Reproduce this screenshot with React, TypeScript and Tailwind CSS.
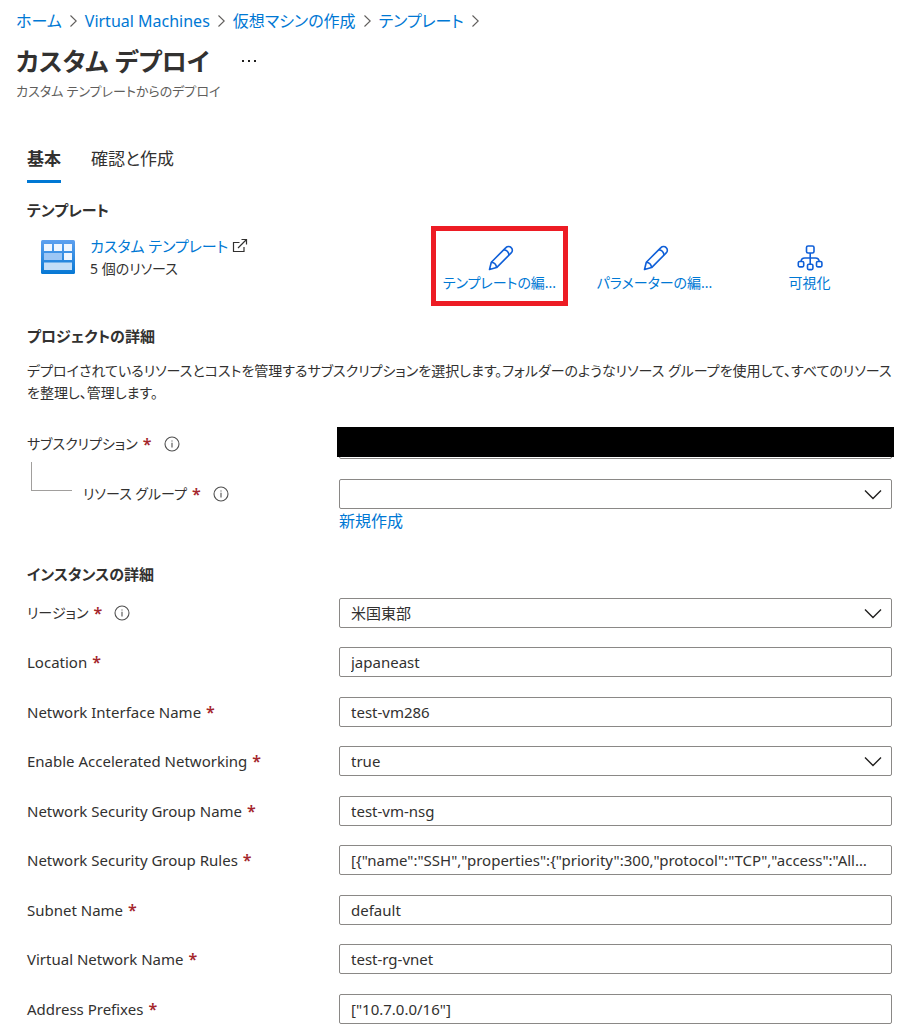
import { Fragment, type ReactNode } from "react";

type Field = {
  id: string;
  label: string;
  value: string;
  kind: "text" | "select";
  info?: boolean;
};

const crumbs = ["ホーム", "Virtual Machines", "仮想マシンの作成", "テンプレート"];

const fields: Field[] = [
  { id: "region", label: "リージョン", value: "米国東部", kind: "select", info: true },
  { id: "location", label: "Location", value: "japaneast", kind: "text" },
  { id: "nic", label: "Network Interface Name", value: "test-vm286", kind: "text" },
  { id: "accelerated", label: "Enable Accelerated Networking", value: "true", kind: "select" },
  { id: "nsg", label: "Network Security Group Name", value: "test-vm-nsg", kind: "text" },
  {
    id: "rules",
    label: "Network Security Group Rules",
    value:
      '[{"name":"SSH","properties":{"priority":300,"protocol":"TCP","access":"Allow","direction":"Inbound"}}]',
    kind: "text",
  },
  { id: "subnet", label: "Subnet Name", value: "default", kind: "text" },
  { id: "vnet", label: "Virtual Network Name", value: "test-rg-vnet", kind: "text" },
  { id: "prefixes", label: "Address Prefixes", value: '["10.7.0.0/16"]', kind: "text" },
];

function InfoIcon() {
  return (
    <svg className="ml-3 size-4 shrink-0" viewBox="0 0 16 16" fill="none" stroke="#505050" aria-hidden="true">
      <circle cx="8" cy="8" r="7" strokeWidth="1.1" />
      <path d="M8 6.8V11.6M8 4.4V5.6" strokeWidth="1.1" />
    </svg>
  );
}

function PencilIcon() {
  return (
    <svg className="size-7" viewBox="0 0 28 28" fill="none" stroke="#0f5fd8" strokeWidth="1.6" strokeLinejoin="round" aria-hidden="true">
      <path d="M3.500 25.500 5.300 18.200 19.900 3.600a3.6 3.6 0 0 1 5.3 0 3.6 3.6 0 0 1 0 5.3L10.600 23.600Z" />
      <path d="M5.300 18.200c2.9.2 4.9 2.3 5.3 5.4M17.700 5.800c2.9.3 4.9 2.3 5.3 5.3" />
    </svg>
  );
}

function HierarchyIcon() {
  return (
    <svg className="size-7" viewBox="0 0 28 28" fill="none" stroke="#0f5fd8" strokeWidth="1.6" aria-hidden="true">
      <rect x="10.5" y="2" width="7.5" height="7" rx="1.6" />
      <rect x="2.300" y="17.5" width="5.400" height="5.400" rx="1.3" />
      <rect x="11.500" y="20.200" width="5.400" height="5.400" rx="1.3" />
      <rect x="20.500" y="17.5" width="5.400" height="5.400" rx="1.3" />
      <path d="M14.200 9V20.200M5 17.5c.2-2.400 1.400-3.5 3.800-3.5h10.600c2.400 0 3.6 1.1 3.8 3.5" />
    </svg>
  );
}

function TemplateIcon() {
  return (
    <svg className="h-[34px] w-[34px] shrink-0" viewBox="0 0 34 34" aria-hidden="true">
      <defs>
        <linearGradient id="tile" x1="0" y1="0" x2="0" y2="1">
          <stop offset="0" stopColor="#5ea0ef" />
          <stop offset="1" stopColor="#0678d4" />
        </linearGradient>
      </defs>
      <rect width="34" height="34" rx="1.5" fill="url(#tile)" />
      <path d="M3 4h8v7H3zM13 4h8v7h-8zM23 4h8v7h-8zM23 13h8v7h-8z" fill="#f0f6fe" />
      <path d="M3 13h18v7H3z" fill="#9cc6f5" />
      <path d="M3 22.500h28v7.500H3z" fill="#c3def7" />
    </svg>
  );
}

function ExternalIcon() {
  return (
    <svg className="ml-1 size-4" viewBox="0 0 16 16" fill="none" stroke="#323130" strokeWidth="1.2" aria-hidden="true">
      <path d="M7.500 4.500H1.500V13.500H12V9" />
      <path d="M6 10 14.500 1.500M9.500 1.500h5v5" />
    </svg>
  );
}

function Required() {
  return <span className="ml-[5px] text-base leading-5 font-semibold text-[#a4262c]">*</span>;
}

function FieldLabel({ id, children, info }: { id: string; children: ReactNode; info?: boolean }) {
  return (
    <label
      htmlFor={id}
      className={info ? "flex h-[30px] items-center text-sm" : "flex h-[30px] items-center text-[15px]"}
    >
      {children}
      <Required />
      {info && <InfoIcon />}
    </label>
  );
}

function Select({ id, value }: { id: string; value: string }) {
  return (
    <div className="relative">
      <select
        id={id}
        defaultValue={value}
        className="block h-[30px] w-full appearance-none rounded-xs border border-[#8a8886] bg-white px-[11px] text-[15px] outline-none"
      >
        <option value={value}>{value}</option>
      </select>
      <svg className="pointer-events-none absolute top-[10px] right-[10px] h-[11px] w-[18px]" viewBox="0 0 18 11" fill="none" stroke="#201f1e" strokeWidth="1.4" aria-hidden="true">
        <path d="M1 1.500 9 9.500 17 1.500" />
      </svg>
    </div>
  );
}

function TextBox({ id, value }: { id: string; value: string }) {
  return (
    <input
      id={id}
      type="text"
      defaultValue={value}
      className="block h-[30px] w-full rounded-xs border border-[#8a8886] bg-white pr-[18px] pl-[11px] text-[15px] text-ellipsis outline-none"
    />
  );
}

function Action({ icon, label, marked }: { icon: ReactNode; label: string; marked?: boolean }) {
  return (
    <button
      type="button"
      className={
        marked
          ? "flex h-20 w-[137px] flex-col items-center border-5 border-[#ed1c24] pt-[13px]"
          : "flex h-20 w-[137px] flex-col items-center border-5 border-transparent pt-[13px]"
      }
    >
      {icon}
      <span className="text-sm leading-[22px] whitespace-nowrap text-[#0078d4]">{label}</span>
    </button>
  );
}

export default function App() {
  return (
    <div className="bg-white font-['Noto_Sans','Noto_Sans_CJK_JP',sans-serif] text-[15px] text-[#323130] [font-feature-settings:'palt']">
      <header className="px-4 pt-[9px]">
        <nav aria-label="パンくずリスト" className="flex h-6 items-center text-base text-[#0078d4]">
          {crumbs.map((crumb) => (
            <Fragment key={crumb}>
              <a href="#" className="whitespace-nowrap">{crumb}</a>
              <svg className="mx-2 h-3 w-[7px]" viewBox="0 0 7 12" fill="none" stroke="#605e5c" strokeWidth="1.1" aria-hidden="true">
                <path d="M.5.500 6.200 6 .5 11.500" />
              </svg>
            </Fragment>
          ))}
        </nav>
        <div className="flex h-12 items-center gap-8 pt-2">
          <h1 className="text-[25px] leading-9 font-semibold">カスタム デプロイ</h1>
          <button type="button" aria-label="その他" className="text-[#201f1e]">
            <svg className="h-1 w-4" viewBox="0 0 16 4" fill="currentColor" aria-hidden="true">
              <path d="M1 1h2v2H1zM7 1h2v2H7zM13 1h2v2h-2z" />
            </svg>
          </button>
        </div>
        <p className="text-[13px] leading-5 text-[#605e5c]">カスタム テンプレートからのデプロイ</p>
      </header>

      <main className="pr-7 pl-[27px]">
        <div role="tablist" className="mt-11 flex gap-[30px] text-[17px]">
          <button type="button" role="tab" aria-selected="true" className="h-[38px] border-b-3 border-[#0078d4] pb-2 font-semibold">
            基本
          </button>
          <button type="button" role="tab" aria-selected="false" className="h-[38px] border-b-3 border-transparent pb-2">
            確認と作成
          </button>
        </div>

        <h2 className="mt-[15px] text-[15px] leading-6 font-semibold">テンプレート</h2>
        <div className="mt-1 flex items-start">
          <div className="ml-[14px] flex flex-1 items-center gap-[15px] pt-2">
            <TemplateIcon />
            <div>
              <a href="#" className="flex items-center text-[15px] leading-6 text-[#0078d4]">
                カスタム テンプレート
                <ExternalIcon />
              </a>
              <p className="text-sm leading-[22px]">5 個のリソース</p>
            </div>
          </div>
          <div className="mr-[14px] flex gap-[18px]">
            <Action icon={<PencilIcon />} label="テンプレートの編..." marked />
            <Action icon={<PencilIcon />} label="パラメーターの編..." />
            <Action icon={<HierarchyIcon />} label="可視化" />
          </div>
        </div>

        <h2 className="mt-[18px] text-[15px] leading-6 font-semibold">プロジェクトの詳細</h2>
        <p className="mt-3 text-sm leading-[22px]">
          デプロイされているリソースとコストを管理するサブスクリプションを選択します。フォルダーのようなリソース グループを使用して、すべてのリソースを整理し、管理します。
        </p>

        <div className="mt-[25px] grid grid-cols-[312px_1fr]">
          <FieldLabel id="subscription" info>サブスクリプション</FieldLabel>
          <div className="relative">
            <Select id="subscription" value="" />
            <div className="absolute -inset-x-[2px] -top-[2px] h-[30px] bg-black" />
          </div>
        </div>
        <div className="mt-5 grid grid-cols-[312px_1fr]">
          <div className="flex">
            <div className="-mt-[17px] mr-[11px] ml-1 h-[29px] w-[41px] border-b border-l border-[#a19f9d]" />
            <FieldLabel id="group" info>リソース グループ</FieldLabel>
          </div>
          <div>
            <Select id="group" value="" />
            <a href="#" className="block w-fit text-base leading-6 text-[#0078d4]">新規作成</a>
          </div>
        </div>

        <h2 className="mt-[29px] text-[15px] leading-6 font-semibold">インスタンスの詳細</h2>
        <div className="mt-3">
          {fields.map((field) => (
            <div key={field.id} className="grid grid-cols-[312px_1fr] odd:mb-[19px] even:mb-5 last:mb-0">
              <FieldLabel id={field.id} info={field.info}>{field.label}</FieldLabel>
              {field.kind === "select" ? (
                <Select id={field.id} value={field.value} />
              ) : (
                <TextBox id={field.id} value={field.value} />
              )}
            </div>
          ))}
        </div>
      </main>
    </div>
  );
}
